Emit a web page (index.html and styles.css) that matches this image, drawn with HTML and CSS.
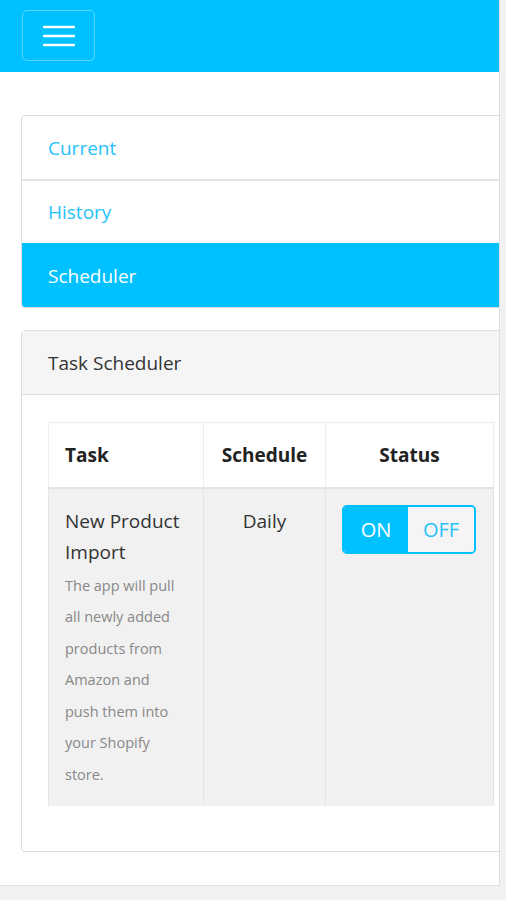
FILE: index.html
```html
<!DOCTYPE html>
<html>
<head>
<meta charset="utf-8">
<link rel="stylesheet" href="styles.css">
</head>
<body>
<div class="frame">
  <header class="topbar">
    <button class="burger" aria-label="Menu">
      <svg width="32" height="22" viewBox="0 0 32 22"><path d="M1 2h30M1 11h30M1 20h30" stroke="#fff" stroke-width="2.4" stroke-linecap="round"/></svg>
    </button>
  </header>
  <main class="content">
    <nav class="list">
      <a class="item">Current</a>
      <a class="item">History</a>
      <a class="item active">Scheduler</a>
    </nav>
    <section class="card">
      <div class="card-head">Task Scheduler</div>
      <div class="card-body">
        <table class="tbl">
          <thead>
            <tr><th class="c1">Task</th><th class="c2">Schedule</th><th class="c3">Status</th></tr>
          </thead>
          <tbody>
            <tr>
              <td class="c1">
                <div class="title">New Product Import</div>
                <div class="desc">The app will pull all newly added products from Amazon and push them into your Shopify store.</div>
              </td>
              <td class="c2 center">Daily</td>
              <td class="c3">
                <div class="toggle"><span class="on">ON</span><span class="off">OFF</span></div>
              </td>
            </tr>
          </tbody>
        </table>
      </div>
    </section>
  </main>
</div>
</body>
</html>
```
FILE: styles.css
```css
html, body { margin: 0; padding: 0; }
body {
  background: #f1f1f1;
  font-family: "Open Sans", "Noto Sans", sans-serif;
  color: #333;
}
.frame {
  width: 499px;
  height: 885px;
  background: #fff;
  border-right: 1px solid #dedede;
  border-bottom: 1px solid #dedede;
  overflow: hidden;
}
.topbar {
  height: 72px;
  background: #00c1ff;
  display: flex;
  align-items: flex-start;
  padding: 10px 0 0 22px;
  box-sizing: border-box;
}
.burger {
  width: 73px;
  height: 51px;
  border: 1px solid rgba(255,255,255,0.35);
  border-radius: 5px;
  background: transparent;
  display: flex;
  align-items: center;
  justify-content: center;
  padding: 0;
}
.content {
  padding: 43px 0 0 21px;
  width: 520px;
}
.list {
  display: flex;
  flex-direction: column;
  border: 1px solid #dcdcdc;
  border-radius: 4px;
  overflow: hidden;
}
.item {
  height: 64px;
  box-sizing: border-box;
  display: flex;
  align-items: center;
  padding-left: 26px;
  font-size: 19px;
  color: #26c2fb;
  border-top: 2px solid #e6e6e6;
}
.item:first-child { border-top: none; height: 63px; }
.item.active {
  background: #00c1ff;
  color: #fff;
  border-top: 1px solid #00c1ff;
}
.card {
  margin-top: 22px;
  border: 1px solid #dcdcdc;
  border-radius: 4px;
  height: 522px;
  box-sizing: border-box;
}
.card-head {
  height: 63px;
  background: #f5f5f5;
  border-bottom: 1px solid #dedede;
  display: flex;
  align-items: center;
  padding-left: 26px;
  font-size: 19px;
  color: #333;
}
.card-body {
  padding: 27px 0 0 26px;
}
.tbl {
  border-collapse: collapse;
  table-layout: fixed;
  width: 445px;
  font-size: 19px;
}
.tbl th {
  height: 65px;
  font-weight: 700;
  color: #222;
  border: 1px solid #ececec;
  border-bottom: 2px solid #dde3ea;
  background: #fff;
  box-sizing: border-box;
  padding: 0;
}
.tbl th.c1 { text-align: left; padding-left: 16px; }
.c1 { width: 155px; }
.c2 { width: 122px; }
.c3 { width: 168px; }
.tbl td {
  background: #f1f1f1;
  border-left: 1px solid #e4e4e4;
  border-right: 1px solid #e4e4e4;
  vertical-align: top;
  padding: 17px 18px 15px 16px;
  box-sizing: border-box;
}
.tbl td.center { text-align: center; padding: 17px 0 0; color: #333; line-height: 31px; }
.title { line-height: 31px; color: #333; }
.desc { font-size: 14.5px; line-height: 31.6px; color: #888; margin-top: 2px; }
.tbl td.c3 { padding: 16px 0 0 16px; }
.toggle {
  display: flex;
  width: 134px;
  height: 49px;
  border: 2px solid #00c1ff;
  border-radius: 5px;
  overflow: hidden;
  box-sizing: border-box;
  font-size: 20px;
}
.toggle span { display: flex; align-items: center; justify-content: center; }
.on { width: 64px; background: #00c1ff; color: #fff; }
.off { flex: 1; background: #f5f5f5; color: #26c2fb; }
```
